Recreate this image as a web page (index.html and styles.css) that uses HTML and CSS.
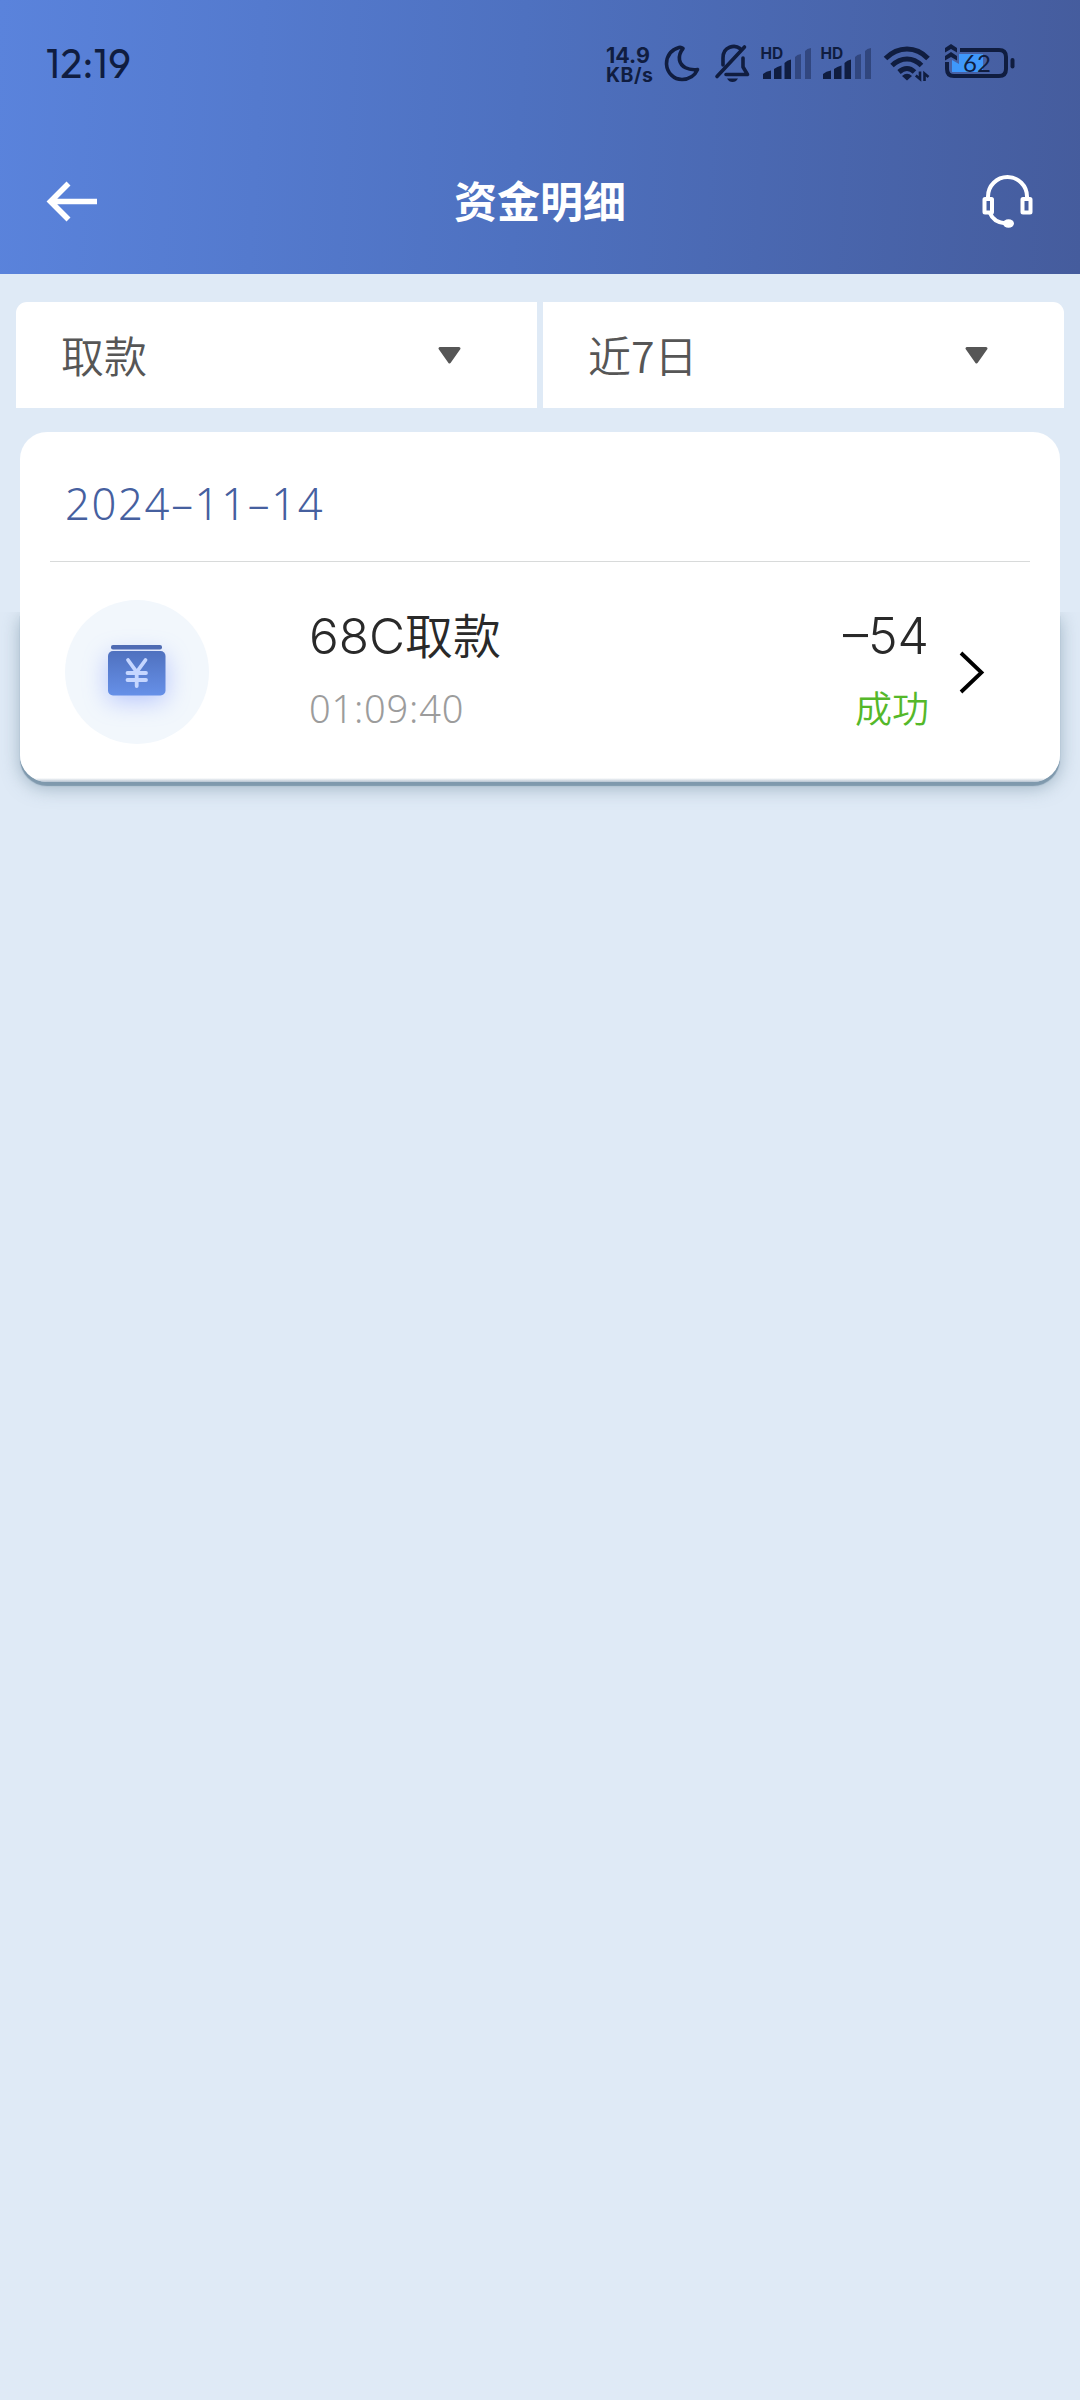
FILE: index.html
```html
<!DOCTYPE html>
<html lang="zh-CN">
<head>
<meta charset="utf-8">
<title>资金明细</title>
<link rel="stylesheet" href="styles.css">
</head>
<body>
<header class="header">
  <div class="status">
    <div class="clock">12:19</div>
    <div class="indicators">
      <div class="speed"><span class="rate">14.9</span><span class="unit">KB/s</span></div>
      <svg class="ind" width="45" height="70" viewBox="660 30 45 70"><path d="M679 47.500C670 50 666.500 57 666.500 64C667 73 674 79.500 682 79.500C689 79.500 695 75.500 697.500 69.500C688 70.500 681 67 679.500 60C678.800 55 680.500 51.500 683 48.500C681.500 47.300 680.500 47.200 679 47.500Z" fill="none" stroke="#101d40" stroke-width="3.600" stroke-linejoin="round"/></svg>
      <svg class="ind" width="50" height="70" viewBox="705 30 50 70"><g fill="none" stroke="#101d40" stroke-width="3.600" stroke-linecap="round" stroke-linejoin="round"><path d="M717 76.500L744.500 47"/><path d="M723 65V58C723 46 735 44.500 740 48.500"/><path d="M743 58V67L747.500 74.500H726"/></g><path d="M727 78.500H738Q736 82 732.500 82T727 78.500Z" fill="#101d40"/></svg>
      <svg class="ind" width="60" height="70" viewBox="755 30 60 70"><text class="hd" x="760.500" y="59">HD</text><g fill="#101d40"><path d="M763 79V74Q766 71 771 70.500V79ZM774 79V69Q777 66.500 781.500 65.500V79ZM784.500 79V63Q787 60 791 59.500V79Z"/><path opacity=".42" d="M795 79V57Q797 54.500 801 54V79ZM805 79V51Q807 48.500 811 48V79Z"/></g></svg>
      <svg class="ind" width="60" height="70" viewBox="755 30 60 70"><text class="hd" x="760.500" y="59">HD</text><g fill="#101d40"><path d="M763 79V74Q766 71 771 70.500V79ZM774 79V69Q777 66.500 781.500 65.500V79ZM784.500 79V63Q787 60 791 59.500V79Z"/><path opacity=".42" d="M795 79V57Q797 54.500 801 54V79ZM805 79V51Q807 48.500 811 48V79Z"/></g></svg>
      <svg class="ind" width="63" height="70" viewBox="875 30 63 70"><g fill="none" stroke="#101d40" stroke-width="5"><path d="M885.500 58.500Q895 49 907 49T928 58.500"/><path d="M892 65.500Q899 59 907 59T921.500 65.500"/><path d="M899 72Q903 68.500 907 68.500T914.500 72"/></g><path d="M902 76Q907 71.500 912 76L907 80.500Z" fill="#101d40"/><path d="M920 71.500V79L915.800 75.500M924.500 81V73.500L928.500 77" fill="none" stroke="#101d40" stroke-width="2.600"/></svg>
      <svg class="ind" width="82" height="70" viewBox="938 30 82 70"><path d="M952 60L959 64V54H983V72H952Z" fill="#3f98fb"/><path d="M960 50H999Q1006 50 1006 57V69Q1006 76 999 76H954Q947 76 947 69V62" fill="none" stroke="#101d40" stroke-width="4"/><path d="M1012.500 60V66.500" stroke="#101d40" stroke-width="4" stroke-linecap="round"/><path d="M945 48L951 44L957 48V52.500L951 49L945 52.500ZM945 56L951 52L957 56V60.500L951 57L945 60.500Z" fill="#101d40"/><text class="charge" x="963" y="72">62</text></svg>
    </div>
  </div>
  <div class="nav">
    <svg width="52" height="46" viewBox="46 179 52 46"><path d="M97 201.500H51M68.500 183.500L50.500 201.500L68.500 219.500" fill="none" stroke="#fff" stroke-width="5.600"/></svg>
    <h1 class="title">资金明细</h1>
    <svg width="52" height="54" viewBox="982 175 52 54"><g fill="none" stroke="#fff" stroke-width="4"><path d="M988 198V196.500A19.500 19.500 0 0 1 1027 196.500V198"/><rect x="984.500" y="199" width="7.500" height="13.500" rx=".5"/><rect x="1022.500" y="199" width="8" height="13.500" rx=".5"/><path d="M990 213Q993.500 222.500 1006 223.500"/></g><ellipse cx="1008.500" cy="223.500" rx="5.500" ry="4.200" fill="#fff"/></svg>
  </div>
</header>
<main class="main">
  <div class="filters">
    <div class="filter"><span class="choice">取款</span><svg width="25" height="19" viewBox="0 0 25 19"><path d="M3 2.500H22L12.500 16Z" fill="#565656" stroke="#565656" stroke-width="3" stroke-linejoin="round"/></svg></div>
    <div class="filter"><span class="choice">近7日</span><svg width="25" height="19" viewBox="0 0 25 19"><path d="M3 2.500H22L12.500 16Z" fill="#565656" stroke="#565656" stroke-width="3" stroke-linejoin="round"/></svg></div>
  </div>
  <section class="card">
    <div class="date">2024–11–14</div>
    <div class="record">
      <div class="badge">
        <svg width="144" height="144" viewBox="65 600 144 144">
          <defs><linearGradient id="wallet" x1="0" y1="0" x2="0" y2="1"><stop offset="0" stop-color="#4f71bf"/><stop offset="1" stop-color="#6690e8"/></linearGradient></defs>
          <rect x="111" y="645" width="51" height="4.500" rx="2" fill="#4f6bae"/>
          <rect class="wallet" x="108" y="651" width="57.500" height="44.500" rx="5" fill="url(#wallet)"/>
          <path d="M128 660L136.700 672L145.500 660M136.700 672V686M127.500 673H146M127.500 680H146" fill="none" stroke="#c5d6ff" stroke-width="3.800" stroke-linecap="round"/>
        </svg>
      </div>
      <div class="info"><div class="name"><span class="code">68C</span>取款</div><div class="time">01:09:40</div></div>
      <div class="result"><div class="amount">–54</div><div class="state">成功</div></div>
      <svg class="chevron" width="26" height="44" viewBox="959 650 26 44"><path d="M961 653L981.500 672.500L961 692" fill="none" stroke="#000" stroke-width="3.800"/></svg>
    </div>
  </section>
</main>
</body>
</html>
```
FILE: styles.css
```css
* { box-sizing: border-box; }
body {
  margin: 0;
  width: 1080px;
  min-height: 2400px;
  background: #dfeaf6;
  font-family: Inter, "Noto Sans CJK SC", sans-serif;
}
svg { display: block; flex: none; }
.header {
  height: 274px;
  background: linear-gradient(93deg, #5a83dc 0%, #4e71c0 48%, #455c9d 100%);
}
.status { display: flex; justify-content: space-between; height: 130px; padding: 30px 60px 0 46px; }
.clock { font: 400 40px/67px Outfit, Lato, sans-serif; letter-spacing: 0.500px; color: #101d40; height: 70px; }
.indicators { display: flex; height: 70px; }
.speed { width: 54px; padding-top: 15px; color: #101d40; font-weight: 700; display: flex; flex-direction: column; }
.rate { font-size: 21.500px; line-height: 20px; }
.unit { font-size: 19.500px; line-height: 20px; letter-spacing: 0.500px; }
.hd { font: 700 15.500px Inter, sans-serif; fill: #101d40; }
.charge { font: 400 24px Lato, sans-serif; fill: #101d40; }
.nav { display: flex; align-items: center; justify-content: space-between; height: 144px; padding: 0 46px; }
.title { margin: 0; font-size: 43px; line-height: 64px; font-weight: 600; color: #fff; }
.main { padding: 28px 16px 0; }
.filters { display: grid; grid-template-columns: 1fr 1fr; gap: 6px; }
.filter {
  display: flex; align-items: center; justify-content: space-between;
  height: 106px; padding: 0 75px 0 45px;
  background: #fff; color: #565656;
}
.choice { font: 350 43px/60px "Noto Sans CJK SC", sans-serif; padding-bottom: 2px; }
.filter:first-child { border-top-left-radius: 11px; }
.filter:last-child { border-top-right-radius: 11px; }
.card {
  position: relative;
  height: 350px; margin: 24px 4px 0; padding: 0 30px;
  background: linear-gradient(to top, #b5c2d0 0, #fff 4px); border-radius: 27px;
}
.card::before {
  content: ""; position: absolute; z-index: -1;
  inset: 180px 0 0; border-radius: 0 0 27px 27px;
  box-shadow: 0 4px 1px #7f99ad, 0 6px 18px rgba(95, 125, 145, .5);
  clip-path: inset(0 -40px -40px);
}
.date {
  height: 130px; padding: 0 15px; border-bottom: 1.500px solid #d8dada;
  font: 350 43.500px/143px "Noto Sans", sans-serif;
  letter-spacing: 1.700px; color: #46609f;
}
.record { display: flex; align-items: flex-start; padding: 38px 45px 0 15px; }
.badge { width: 144px; height: 144px; border-radius: 50%; background: #f2f7fc; }
.wallet { filter: drop-shadow(0 5px 12px rgba(90, 120, 255, .4)); }
.info { margin-left: 100px; flex: 1; }
.name, .amount { font-size: 48px; line-height: 73px; height: 72px; font-weight: 350; color: #292929; }
.code, .amount { font-weight: 300; }
.code { font-size: 49.500px; }
.amount { font-size: 50px; }
.time { font: 300 38px/73px "Noto Sans", sans-serif; letter-spacing: 0.800px; color: #9c9c9c; }
.result { text-align: right; margin-right: 30px; }
.state { font-size: 37px; line-height: 75px; color: #55b82a; font-weight: 350; }
.chevron { margin-top: 50px; }
```
